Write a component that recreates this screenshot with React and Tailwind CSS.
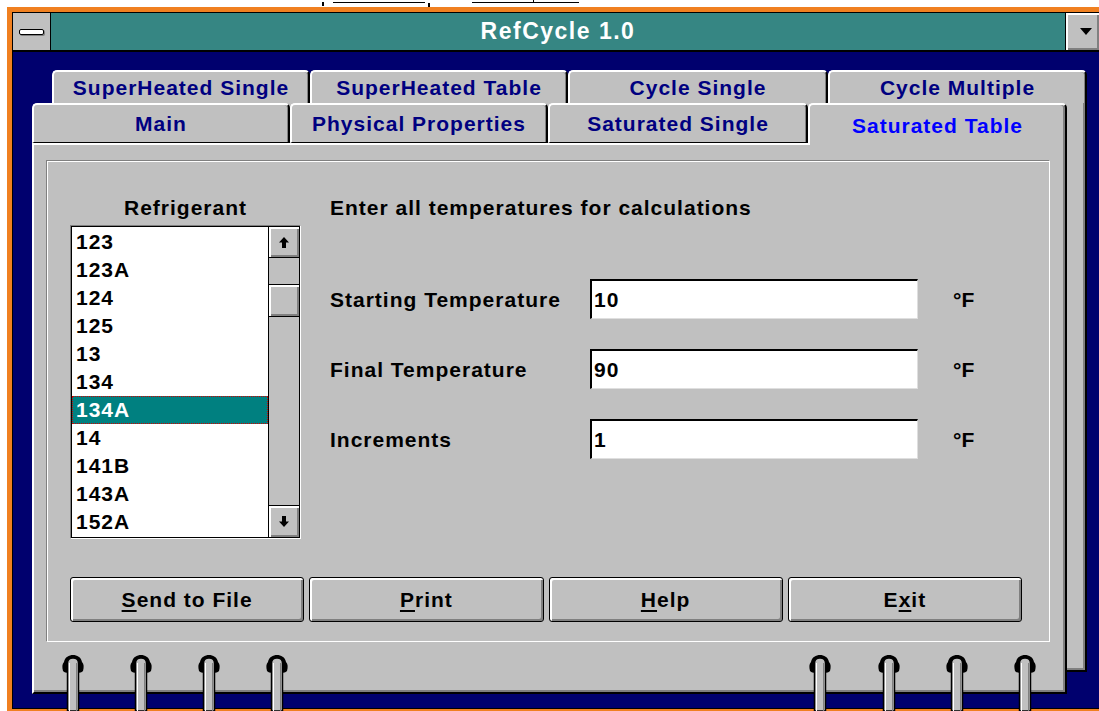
import React from 'react'

const refrigerants = ['123', '123A', '124', '125', '13', '134', '134A', '14', '141B', '143A', '152A']
const selectedRefrigerant = '134A'

const backTabs = [
  { label: 'SuperHeated Single', width: 'w-[258px]' },
  { label: 'SuperHeated Table', width: 'w-[258px]' },
  { label: 'Cycle Single', width: 'w-[260px]' },
  { label: 'Cycle Multiple', width: 'w-[259px]' },
]

const frontTabs = [
  { label: 'Main', width: 'w-[258px]' },
  { label: 'Physical Properties', width: 'w-[258px]' },
  { label: 'Saturated Single', width: 'w-[260px]' },
]

const fields = [
  { label: 'Starting Temperature', value: '10' },
  { label: 'Final Temperature', value: '90' },
  { label: 'Increments', value: '1' },
]

const buttons = [
  { key: 'S', rest: 'end to File' },
  { key: 'P', rest: 'rint' },
  { key: 'H', rest: 'elp' },
  { pre: 'E', key: 'x', rest: 'it' },
]

// binder rings along the bottom of the notebook
const rings = [
  'left-[62px]', 'left-[130px]', 'left-[198px]', 'left-[266px]',
  'left-[809px]', 'left-[878px]', 'left-[946px]', 'left-[1014px]',
]

const raised = 'shadow-[inset_2px_2px_0_#ffffff,inset_-2px_-2px_0_#808080]'

function Ring({ left }) {
  return (
    <svg className={`absolute top-[655px] ${left}`} width="22" height="56" viewBox="0 0 22 56">
      <path
        d="M1 16 C0 12 0 9 2 7 C3 2 7 0 11 0 C15 0 19 2 20 7 C22 9 22 12 21 16 C19 18 17 18 16 17 L6 17 C5 18 3 18 1 16 Z"
        fill="#000"
      />
      <path d="M5.5 56 V8 C5.5 5 8 3 11 3 C14 3 16.5 5 16.5 8 V56 Z" fill="#c0c0c0" stroke="#000" strokeWidth="1.5" />
      <line x1="7.5" y1="8" x2="7.5" y2="56" stroke="#fff" strokeWidth="1" />
      <line x1="14.5" y1="8" x2="14.5" y2="56" stroke="#808080" strokeWidth="1" />
    </svg>
  )
}

function ScrollArrow({ down }) {
  return (
    <svg width="10" height="11" viewBox="0 0 10 11" className={down ? 'rotate-180' : ''}>
      <path d="M5 0 L10 5.5 H7 V11 H3 V5.5 H0 Z" fill="#000" />
    </svg>
  )
}

export default function App() {
  return (
    <div className="relative h-[711px] w-[1099px] overflow-hidden bg-white font-['Liberation_Sans',Arial,sans-serif] text-[21px] font-bold leading-none tracking-[1px] text-black">
      {/* menu underlines above the window */}
      <div className="flex h-[7px] items-start">
        <div className="ml-[322px] mt-[2px] h-[4px] w-[2px] bg-black" />
        <div className="ml-[9px] mt-[2px] h-px w-[92px] bg-black" />
        <div className="ml-[3px] mt-[3px] h-[4px] w-[2px] bg-black" />
        <div className="ml-[42px] mt-[2px] h-px w-[61px] bg-black" />
        <div className="mt-0 h-[3px] w-px bg-black" />
        <div className="mt-[2px] h-px w-[45px] bg-black" />
      </div>

      <div className="ml-[7px] flex h-[704px] flex-col bg-[#f08020] pb-[2px] pl-[5px] pt-[5px]">
        <div className="flex flex-1 flex-col border-b border-l border-t border-black">
          {/* title bar */}
          <div className="flex h-[39px] border-b-2 border-black">
            <div className="flex w-[38px] items-center justify-center border-r border-black bg-[#c0c0c0]">
              <div className="h-[6px] w-[25px] rounded-[2px] border border-black bg-white shadow-[1px_1px_0_#808080]" />
            </div>
            <div className="flex flex-1 items-center justify-center bg-[#368683] text-[23px] tracking-[1.5px] text-white">
              RefCycle 1.0
            </div>
            <div className={`flex w-[34px] items-center justify-center border-l border-black bg-[#c0c0c0] pl-[6px] ${raised}`}>
              <svg width="12" height="7" viewBox="0 0 12 7">
                <path d="M0 0 H12 L6 7 Z" fill="#000" />
              </svg>
            </div>
          </div>

          {/* notebook area */}
          <div className="flex h-[656px] flex-col bg-[#00006e] pt-[18px]">
            <div className="ml-[39px] flex h-[33px]">
              {backTabs.map((tab) => (
                <div
                  key={tab.label}
                  className={`${tab.width} flex items-center justify-center rounded-t-[5px] border-l-2 border-r-2 border-t-2 border-white border-r-black bg-[#c0c0c0] text-[#000080] shadow-[inset_-1px_0_0_#808080]`}
                >
                  {tab.label}
                </div>
              ))}
            </div>

            <div className="ml-[19px] flex items-start">
              <div className="flex w-[1035px] flex-col">
                <div className="flex h-[42px] bg-[linear-gradient(to_right,#00006e_20px,#c0c0c0_20px)]">
                  {frontTabs.map((tab) => (
                    <div key={tab.label} className={`${tab.width} flex flex-col`}>
                      <div className="flex h-[40px] items-center justify-center rounded-t-[5px] border-b border-l-2 border-r-2 border-t-2 border-white border-b-black border-r-black bg-[#c0c0c0] text-[#000080] shadow-[inset_-1px_0_0_#808080]">
                        {tab.label}
                      </div>
                      <div className="h-[2px] bg-white" />
                    </div>
                  ))}
                  <div className="flex h-[42px] w-[259px] items-center justify-center rounded-t-[5px] border-l-2 border-r-2 border-t-2 border-white border-r-black bg-[#c0c0c0] text-[#0000ff] shadow-[inset_-2px_0_0_#808080]">
                    Saturated Table
                  </div>
                </div>

                {/* page */}
                <div className="flex h-[549px] flex-col border-b-2 border-l-2 border-r-2 border-white border-b-black border-r-black bg-[#c0c0c0] pl-[12px] pr-[15px] pt-[15px] shadow-[inset_-2px_-2px_0_#808080]">
                  <div className="flex h-[482px] flex-col border border-[#808080] border-b-white border-r-white pb-[19px] pl-[23px] shadow-[inset_1px_1px_0_#ffffff]">
                    <div className="flex">
                      <div className="flex w-[231px] flex-col items-center pt-[36px]">
                        <div className="h-[21px]">Refrigerant</div>
                        <div className="mt-[7px] border border-[#808080] border-b-white border-r-white">
                          <div className="flex h-[312px] w-[229px] border border-black bg-white">
                            <div className="flex w-[196px] flex-col pt-[1px]">
                              {refrigerants.map((r) =>
                                r === selectedRefrigerant ? (
                                  <div key={r} className="h-[28px] bg-[#008080] pl-[4px] leading-[28px] text-white outline-1 -outline-offset-1 outline-dotted outline-[#d00000]">
                                    {r}
                                  </div>
                                ) : (
                                  <div key={r} className="h-[28px] pl-[4px] leading-[28px]">
                                    {r}
                                  </div>
                                )
                              )}
                            </div>
                            <div className="flex flex-1 flex-col border-l border-black bg-[#c0c0c0]">
                              <div className={`flex h-[31px] items-center justify-center border-b border-black ${raised}`}>
                                <ScrollArrow />
                              </div>
                              <div className="h-[26px]" />
                              <div className={`h-[33px] border-y border-black ${raised}`} />
                              <div className="flex-1" />
                              <div className={`flex h-[32px] items-center justify-center border-t border-black ${raised}`}>
                                <ScrollArrow down />
                              </div>
                            </div>
                          </div>
                        </div>
                      </div>

                      <div className="ml-[29px] flex flex-col pt-[36px]">
                        <div className="h-[21px]">Enter all temperatures for calculations</div>
                        <div className="mt-[61px] flex flex-col gap-[30px]">
                          {fields.map((f) => (
                            <div key={f.label} className="flex h-[40px] items-center">
                              <div className="w-[260px]">{f.label}</div>
                              <div className="flex h-full w-[328px] items-center border-b border-l-2 border-r border-t-2 border-black border-b-[#dfdfdf] border-r-[#dfdfdf] bg-white pl-[2px]">
                                {f.value}
                              </div>
                              <div className="ml-[35px] tracking-normal">°F</div>
                            </div>
                          ))}
                        </div>
                      </div>
                    </div>

                    <div className="mt-auto grid w-[952px] grid-cols-4 gap-[5px]">
                      {buttons.map((b) => (
                        <div
                          key={b.key + b.rest}
                          className={`flex h-[45px] items-center justify-center rounded-[3px] border border-black bg-[#c0c0c0] ${raised}`}
                        >
                          <span>
                            {b.pre}
                            <span className="underline decoration-2 underline-offset-[3px]">{b.key}</span>
                            {b.rest}
                          </span>
                        </div>
                      ))}
                    </div>
                  </div>
                </div>
              </div>

              {/* edge of the page behind */}
              <div className="h-[569px] w-[20px] border-b-2 border-r-2 border-black bg-[#c0c0c0] shadow-[inset_-2px_-2px_0_#808080]" />
            </div>
          </div>
        </div>
      </div>

      {rings.map((left) => (
        <Ring key={left} left={left} />
      ))}
    </div>
  )
}
